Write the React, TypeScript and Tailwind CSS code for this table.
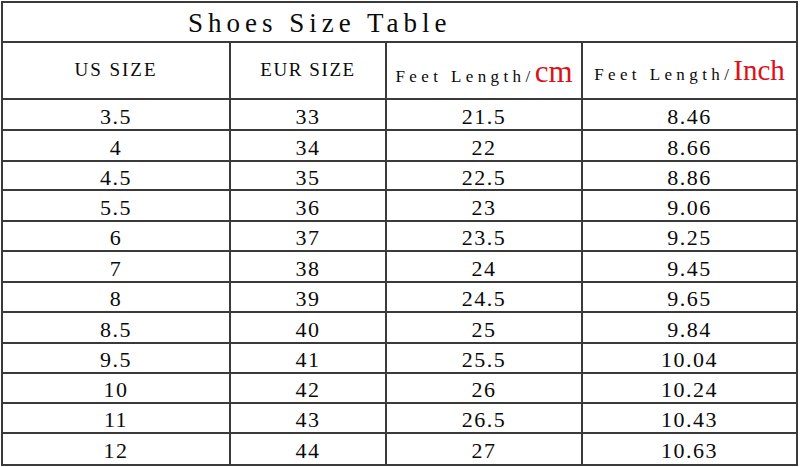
const filas: [string, string, string, string, string][] = [
  ["3.5", "33", "21.5", "8.46", "h-[31px]"],
  ["4", "34", "22", "8.66", "h-[31px]"],
  ["4.5", "35", "22.5", "8.86", "h-[29px]"],
  ["5.5", "36", "23", "9.06", "h-[31px]"],
  ["6", "37", "23.5", "9.25", "h-[30px]"],
  ["7", "38", "24", "9.45", "h-[31px]"],
  ["8", "39", "24.5", "9.65", "h-[30px]"],
  ["8.5", "40", "25", "9.84", "h-[31px]"],
  ["9.5", "41", "25.5", "10.04", "h-[30px]"],
  ["10", "42", "26", "10.24", "h-[30px]"],
  ["11", "43", "26.5", "10.43", "h-[30px]"],
  ["12", "44", "27", "10.63", "h-[32px]"],
];

const celda = "flex items-center justify-center border-r-2 border-b-2 border-[#3a3a3a]";

export default function App() {
  return (
    <div className="w-[800px] h-[467px] bg-white text-[#0a0a0a] [font-family:'Liberation_Serif',serif] overflow-hidden">
      <div className="ml-[1px] mt-[1px] w-[797px] grid grid-cols-[228px_156px_196px_215px] border-t-2 border-l-2 border-[#3a3a3a]">
        {/* Título */}
        <div className="col-span-4 h-[40px] flex items-center border-r-2 border-b-2 border-[#3a3a3a] pl-[185px] pt-[2px]">
          <span className="text-[27px] tracking-[5px] leading-none">Shoes Size Table</span>
        </div>

        {/* Encabezados */}
        <div className={`${celda} h-[57px] text-[19px] tracking-[2px]`}>US SIZE</div>
        <div className={`${celda} h-[57px] text-[19px] tracking-[1.6px]`}>EUR SIZE</div>
        <div className={`${celda} h-[57px] pt-[4px]`}>
          <span className="flex items-baseline whitespace-nowrap">
            <span className="text-[17px] tracking-[4.4px]">Feet Length/</span>
            <span className="text-[31px] leading-none text-[#dc1219]">cm</span>
          </span>
        </div>
        <div className={`${celda} h-[57px] pt-[2px]`}>
          <span className="flex items-baseline whitespace-nowrap">
            <span className="text-[17px] tracking-[4.4px]">Feet Length/</span>
            <span className="text-[29px] leading-none text-[#dc1219]">Inch</span>
          </span>
        </div>

        {/* Filas */}
        {filas.map(([us, eur, cm, inch, alto]) => (
          <div key={us} className="contents">
            {[us, eur, cm, inch].map((v, i) => (
              <div key={i} className={`${celda} ${alto} text-[22px] tracking-[1.5px] pt-[3px]`}>
                {v}
              </div>
            ))}
          </div>
        ))}
      </div>
    </div>
  );
}
